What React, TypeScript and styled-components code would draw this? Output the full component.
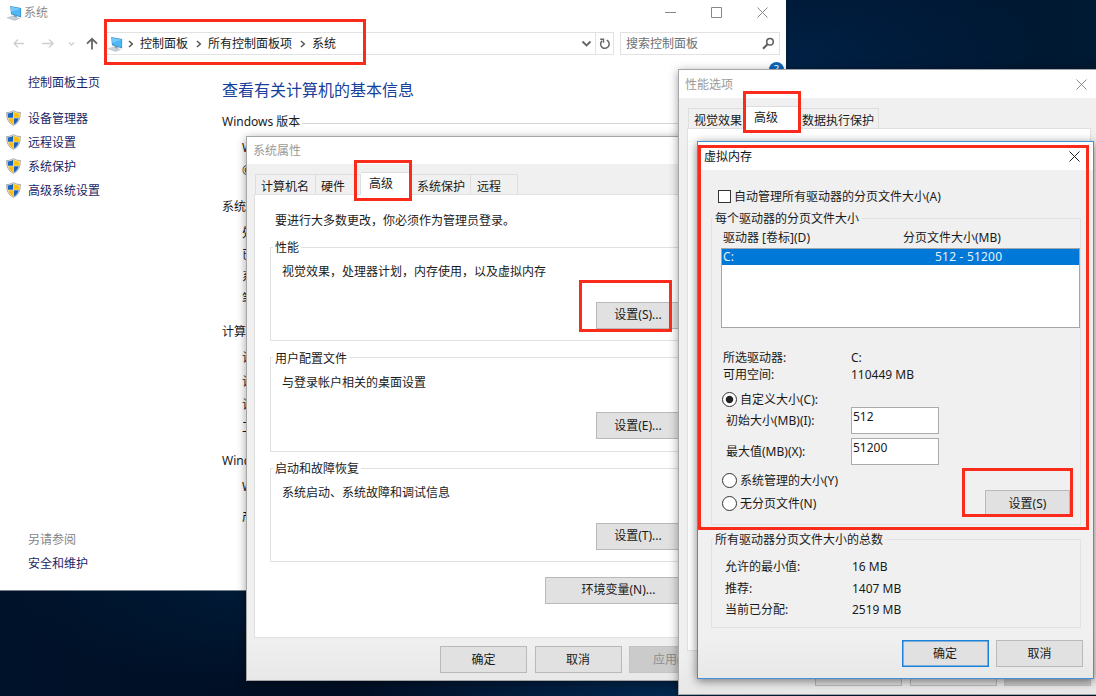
import type { ReactNode } from "react";
import styled, { createGlobalStyle, css } from "styled-components";

const RED = "#fb2b1b";
const FACE = "#f0f0f0";
const LINK = "#1c1f66";
const FONT = `"Noto Sans", "Noto Sans CJK SC", sans-serif`;

const GlobalStyle = createGlobalStyle`
  * {
    box-sizing: border-box;
  }
  body {
    margin: 0;
    overflow: hidden;
    font-family: ${FONT};
    font-size: 12px;
    line-height: 16px;
    color: #1a1a1a;
  }
`;

const Desktop = styled.div`
  position: relative;
  width: 1096px;
  height: 696px;
  overflow: hidden;
  background: radial-gradient(
      ellipse 260px 120px at 790px 60px,
      rgba(0, 36, 74, 0.8),
      transparent
    ),
    radial-gradient(
      ellipse 330px 110px at 680px 696px,
      rgba(0, 42, 84, 0.85),
      transparent
    ),
    radial-gradient(
      ellipse 260px 100px at 270px 590px,
      rgba(0, 30, 60, 0.8),
      transparent
    ),
    linear-gradient(90deg, #00122a 0%, #000e23 30%, #001530 80%, #001a33 100%);
`;

interface WindowProps {
  $x: number;
  $y: number;
  $w: number;
  $h: number;
}

const Window = styled.div<WindowProps>`
  position: absolute;
  isolation: isolate;
  left: ${(p) => p.$x}px;
  top: ${(p) => p.$y}px;
  width: ${(p) => p.$w}px;
  height: ${(p) => p.$h}px;
  display: flex;
  flex-direction: column;
  white-space: nowrap;
`;

const ExplorerWindow = styled(Window)`
  background: #fff;
  border-bottom: 1px solid #76808a;
`;

const Dialog = styled(Window)<{ $active?: boolean }>`
  border: 1px solid ${(p) => (p.$active ? "#3d93dc" : "#a6a6a6")};
  background: linear-gradient(${FACE} 92%, #e8e8e8);
  box-shadow: 0 2px 9px rgba(0, 0, 0, ${(p) => (p.$active ? 0.5 : 0.38)});
`;

const DialogTitle = styled.div<{ $h: number; $active?: boolean }>`
  display: flex;
  flex: none;
  align-items: center;
  justify-content: space-between;
  height: ${(p) => p.$h}px;
  padding: 1px 13px 0 6px;
  background: #fff;
  color: ${(p) => (p.$active ? "#111" : "#9a9a9a")};
`;

/* explorer window parts */

const Caption = styled.div`
  display: flex;
  align-items: center;
  height: 25px;
  padding: 0 18px 0 6px;
  gap: 2px;
  color: #8a8a8a;
`;

const CaptionButtons = styled.div`
  display: flex;
  gap: 35px;
  margin-left: auto;
  color: #888;
`;

const NavBar = styled.div`
  display: flex;
  align-items: center;
  height: 23px;
  margin-top: 7px;
  padding-right: 6px;
`;

const NavArrows = styled.div`
  display: flex;
  align-items: center;
  width: 104px;
  padding-left: 12px;
`;

const AddressBar = styled.div`
  display: flex;
  align-items: center;
  width: 510px;
  height: 23px;
  padding-left: 2px;
  border: 1px solid #e2e2e2;
`;

const Crumb = styled.span`
  margin: 0 8px 0 6px;
`;

const CrumbTrail = styled.div`
  margin-left: 5px;
`;

const DropDown = styled.svg`
  margin-left: auto;
`;

const Refresh = styled.div`
  display: flex;
  align-items: center;
  justify-content: center;
  width: 18px;
  height: 21px;
  margin-left: 3px;
  border-left: 1px solid #e2e2e2;
`;

const SearchBox = styled.div`
  display: flex;
  align-items: center;
  justify-content: space-between;
  width: 160px;
  height: 23px;
  margin-left: 6px;
  padding: 0 4px 0 5px;
  border: 1px solid #e2e2e2;
  color: #6f6f6f;
`;

const ExplorerBody = styled.div`
  display: flex;
  flex: 1;
`;

const Sidebar = styled.div`
  display: flex;
  flex-direction: column;
  width: 222px;
  padding: 20px 0 15px;
  color: ${LINK};
`;

const SideHome = styled.div`
  margin: 0 0 16px 28px;
`;

const SideLink = styled.div`
  display: flex;
  align-items: center;
  gap: 7px;
  height: 24px;
  padding-left: 6px;
  svg {
    margin-top: -2px;
  }
`;

const SeeAlso = styled.div`
  margin: auto 0 0 28px;
  line-height: 23.5px;
  span {
    display: block;
    color: #858585;
  }
`;

const Info = styled.div`
  position: relative;
  flex: 1;
`;

const Heading = styled.h1`
  margin: 23px 0 0;
  font-size: 16px;
  font-weight: 400;
  line-height: 24px;
  color: #17409c;
`;

const SectionHead = styled.div<{ $gap: number }>`
  display: flex;
  align-items: center;
  gap: 2px;
  margin-top: ${(p) => p.$gap}px;
  &::after {
    content: "";
    flex: 1;
    height: 1px;
    margin-top: 3px;
    background: #d6d6d6;
  }
`;

const InfoRow = styled.div<{ $gap: number }>`
  margin: ${(p) => p.$gap}px 0 0 20px;
`;

const HelpBadge = styled.div`
  position: absolute;
  right: 2px;
  top: 7px;
  width: 15px;
  height: 15px;
  border-radius: 50%;
  background: #0e66b8;
  color: #fff;
  font-size: 11px;
  line-height: 14px;
  text-align: center;
`;

/* dialog parts */

const Tabs = styled.div`
  display: flex;
  align-items: flex-end;
  height: 22px;
`;

const Tab = styled.div<{ $w: number; $inset?: number; $selected?: boolean }>`
  width: ${(p) => p.$w}px;
  height: 20px;
  padding: 3px 0 0 ${(p) => p.$inset ?? 5}px;
  border: 1px solid #dedede;
  border-bottom: 0;
  border-left-width: 0;
  line-height: 17px;
  &:first-child {
    border-left-width: 1px;
  }
  ${(p) =>
    p.$selected &&
    css`
      height: 23px;
      margin-bottom: -1px;
      padding: 3px 0 0 8px;
      background: #fff;
      line-height: 16px;
      z-index: 1;
    `}
`;

const Panel = styled.div<{ $h: number }>`
  height: ${(p) => p.$h}px;
  border: 1px solid #e0e0e0;
  background: #fff;
`;

const SystemBody = styled.div`
  padding: 8px 6px 0 7px;
`;

const SystemTabs = styled(Tabs)`
  padding-left: 1px;
`;

const SystemPanel = styled(Panel)`
  padding: 18px 14px 0 15px;
`;

const Intro = styled.div`
  margin: 0 0 9px 5px;
`;

const Group = styled.fieldset<{ $h: number; $gap?: number }>`
  min-width: 0;
  height: ${(p) => p.$h}px;
  margin: ${(p) => p.$gap ?? 0}px 0 0;
  padding: 0;
  border: 1px solid #e0e0e0;
  legend {
    margin-left: 2px;
    padding: 2px 2px 0;
  }
`;

const GroupText = styled.div`
  margin: 8px 0 21.5px 11px;
`;

const Button = styled.div<{
  $w?: number;
  $default?: boolean;
  $disabled?: boolean;
}>`
  display: flex;
  flex: none;
  align-items: center;
  justify-content: center;
  width: ${(p) => p.$w ?? 87}px;
  height: 27px;
  border: 1px solid #b9b9b9;
  background: #e1e1e1;
  ${(p) =>
    p.$default &&
    css`
      border-color: #1a80d8;
      box-shadow: inset 0 0 0 0.5px #1a80d8;
    `}
  ${(p) =>
    p.$disabled &&
    css`
      border-color: #c3c3c3;
      background: #cbcbcb;
      color: #8d8d8d;
    `}
`;

const GroupButton = styled(Button)`
  margin-left: 325px;
`;

const EnvButton = styled(Button)`
  margin: 14.5px 0 0 275px;
`;

const ButtonRow = styled.div<{ $gap: number }>`
  display: flex;
  justify-content: flex-end;
  gap: 7.5px;
  margin-top: ${(p) => p.$gap}px;
`;

const PerfBody = styled.div`
  padding: 8px 9px 0 8px;
`;

const PerfTabs = styled(Tabs)`
  padding-left: 1px;
`;

const MemoryBody = styled.div`
  padding: 19px 10px 0 13px;
`;

const Check = styled.div`
  display: flex;
  align-items: center;
  gap: 3px;
  height: 16px;
  margin: 0 0 4px 7px;
`;

const CheckMark = styled.span`
  width: 13px;
  height: 13px;
  margin-top: -2px;
  border: 1px solid #333;
  background: #fff;
`;

const MemoryGroup = styled(Group)`
  width: 370px;
  border-color: #e2e2e2;
  legend {
    margin-left: 1px;
  }
`;

const Columns = styled.div<{ $gap?: number; $left?: number; $first?: number }>`
  display: grid;
  grid-template-columns: ${(p) => p.$first ?? 128}px 1fr;
  margin: ${(p) => p.$gap ?? 0}px 0 0 ${(p) => p.$left ?? 11}px;
`;

const DriveList = styled.div`
  height: 80px;
  margin: 2px 0 0 9px;
  border: 1px solid #a5a5a5;
  background: #fff;
`;

const DriveRow = styled.div`
  display: grid;
  grid-template-columns: 212px 1fr;
  padding-left: 1px;
  background: #0078d7;
  color: #e6f2fc;
  letter-spacing: 0.2px;
`;

const SizeField = styled.div<{ $gap: number }>`
  display: grid;
  grid-template-columns: 125px 88px;
  align-items: center;
  margin: ${(p) => p.$gap}px 0 0 14px;
`;

const Input = styled.div`
  height: 27px;
  padding: 1px;
  border: 1px solid #ababab;
  background: #fff;
`;

const Radio = styled.div<{ $gap: number; $checked?: boolean }>`
  display: flex;
  align-items: center;
  gap: 3px;
  height: 16px;
  margin: ${(p) => p.$gap}px 0 0 10px;
  &::before {
    content: "";
    width: 13px;
    height: 13px;
    margin-top: -1px;
    border: 1px solid #333;
    border-radius: 50%;
    background: ${(p) =>
      p.$checked
        ? "radial-gradient(circle, #222 3.2px, #fff 4.2px)"
        : "#fff"};
  }
`;

const RadioArea = styled.div`
  display: flex;
  justify-content: space-between;
  padding-right: 10px;
`;

const SetButton = styled(Button)`
  margin-top: 25px;
`;

const Highlight = styled.div<WindowProps>`
  position: absolute;
  left: ${(p) => p.$x}px;
  top: ${(p) => p.$y}px;
  width: ${(p) => p.$w}px;
  height: ${(p) => p.$h}px;
  border: 3px solid ${RED};
`;

/* icons */

const Close = ({ color }: { color: string }) => (
  <svg width="11" height="11" viewBox="0 0 11 11">
    <path d="M.5 .5l10 10M10.5 .5l-10 10" stroke={color} fill="none" />
  </svg>
);

const Computer = () => (
  <svg width="16" height="16" viewBox="0 0 16 16">
    <path d="M.8 12.6l5.4-2.1 7.600 2.700-5.200 2.200z" fill="#c9d1d6" />
    <path d="M.8 12.6l7.800 2.800 5.200-2.200" fill="none" stroke="#aab5bc" strokeWidth=".6" />
    <path d="M8 9.700l3 1-.4 2-3.400-1.200z" fill="#93a3ad" />
    <path d="M4.200 1l10.900 2.100v9.300L5 9.200z" fill="#3b8fc4" />
    <path d="M4.900 1.800l9.500 1.900v7.900L5.600 8.600z" fill="#4db8f5" />
    <path d="M4.900 1.800l9.500 1.900-9.100 3.100z" fill="#74c9fa" />
  </svg>
);

const Shield = () => (
  <svg width="15" height="16" viewBox="0 0 15 16">
    <path
      d="M7.5 .6C5.5 2 3 2.6.7 2.5c-.2 6 1.600 10.500 6.800 12.900 5.200-2.400 7-6.900 6.800-12.900C12 2.600 9.500 2 7.500 .6z"
      fill="#f4f4ee"
      stroke="#8b8f92"
      strokeWidth=".8"
    />
    <path d="M7.200 1.800C5.600 2.800 3.600 3.400 1.700 3.400c0 1.600 0 2.900.3 4.300h5.200z" fill="#1763bd" />
    <path d="M7.800 1.800c1.600 1 3.600 1.600 5.500 1.600 0 1.600 0 2.900-.3 4.300H7.800z" fill="#fcc013" />
    <path d="M7.200 8.300H2.200c.8 2.900 2.400 5 5 6.200z" fill="#fcb813" />
    <path d="M7.800 8.300h5c-.8 2.900-2.400 5-5 6.200z" fill="#1763bd" />
  </svg>
);

const Chevron = () => (
  <svg width="6" height="8" viewBox="0 0 6 8">
    <path d="M1 1l3.300 3L1 7" stroke="#555" strokeWidth="1.500" fill="none" />
  </svg>
);

function Arrows() {
  return (
    <NavArrows>
      <svg width="88" height="14" viewBox="0 0 88 14" fill="none">
        <g stroke="#cfcfcf" strokeWidth="1.300">
          <path d="M12 6.500H2M6 2.500l-4 4 4 4" />
          <path d="M30 6.500h11M37 2.500l4 4-4 4" />
          <path d="M57 5.500l2.500 2.500L62 5.500" />
        </g>
        <path d="M80 12.500V2M75 6.700l5-4.900 5 4.900" stroke="#666" strokeWidth="1.800" />
      </svg>
    </NavArrows>
  );
}

function Crumbs({ items }: { items: string[] }) {
  return (
    <CrumbTrail>
      {items.map((item) => (
        <span key={item}>
          <Chevron />
          <Crumb>{item}</Crumb>
        </span>
      ))}
    </CrumbTrail>
  );
}

const SIDE_LINKS = ["设备管理器", "远程设置", "系统保护", "高级系统设置"];

function Explorer() {
  return (
    <ExplorerWindow $x={0} $y={0} $w={786} $h={591}>
      <Caption>
        <Computer />
        系统
        <CaptionButtons>
          <svg width="11" height="11" viewBox="0 0 11 11">
            <path d="M0 5.500h11" stroke="currentColor" />
          </svg>
          <svg width="11" height="11" viewBox="0 0 11 11">
            <path d="M.5 .5h10v10H.5z" stroke="currentColor" fill="none" />
          </svg>
          <Close color="#888" />
        </CaptionButtons>
      </Caption>
      <NavBar>
        <Arrows />
        <AddressBar>
          <Computer />
          <Crumbs items={["控制面板", "所有控制面板项", "系统"]} />
          <DropDown width="11" height="8" viewBox="0 0 11 8">
            <path d="M1.500 1.500l4 4 4-4" stroke="#666" strokeWidth="1.900" fill="none" />
          </DropDown>
          <Refresh>
            <svg width="12" height="12" viewBox="0 0 12 12" fill="none">
              <path d="M7.800 2.200A4.300 4.300 0 1 1 3 2.900" stroke="#666" strokeWidth="1.500" />
              <path d="M1.200 1.300h3.300v3.400" stroke="#666" strokeWidth="1.400" />
            </svg>
          </Refresh>
        </AddressBar>
        <SearchBox>
          搜索控制面板
          <svg width="13" height="13" viewBox="0 0 13 13" fill="none" stroke="#5c5c5c">
            <circle cx="8" cy="4.700" r="3.300" strokeWidth="1.500" />
            <path d="M5.500 7.200L1 11.700" strokeWidth="2" />
          </svg>
        </SearchBox>
      </NavBar>
      <ExplorerBody>
        <Sidebar>
          <SideHome>控制面板主页</SideHome>
          {SIDE_LINKS.map((text) => (
            <SideLink key={text}>
              <Shield />
              {text}
            </SideLink>
          ))}
          <SeeAlso>
            <span>另请参阅</span>
            安全和维护
          </SeeAlso>
        </Sidebar>
        <Info>
          <HelpBadge>?</HelpBadge>
          <Heading>查看有关计算机的基本信息</Heading>
          <SectionHead $gap={12}>Windows 版本</SectionHead>
          <InfoRow $gap={10}>W</InfoRow>
          <InfoRow $gap={7}>©</InfoRow>
          <SectionHead $gap={20}>系统</SectionHead>
          <InfoRow $gap={10}>处</InfoRow>
          <InfoRow $gap={6}>已</InfoRow>
          <InfoRow $gap={6}>系</InfoRow>
          <InfoRow $gap={6}>笔</InfoRow>
          <SectionHead $gap={17}>计算</SectionHead>
          <InfoRow $gap={10}>计</InfoRow>
          <InfoRow $gap={8}>计</InfoRow>
          <InfoRow $gap={7}>计</InfoRow>
          <InfoRow $gap={7}>工</InfoRow>
          <SectionHead $gap={17}>Windo</SectionHead>
          <InfoRow $gap={10}>W</InfoRow>
          <InfoRow $gap={14}>产</InfoRow>
        </Info>
      </ExplorerBody>
    </ExplorerWindow>
  );
}

interface SettingsGroupProps {
  title: string;
  gap?: number;
  button: string;
  children: ReactNode;
}

function SettingsGroup({ title, gap, button, children }: SettingsGroupProps) {
  return (
    <Group $h={103} $gap={gap}>
      <legend>{title}</legend>
      <GroupText>{children}</GroupText>
      <GroupButton $w={84}>{button}</GroupButton>
    </Group>
  );
}

function SystemProperties() {
  return (
    <Dialog $x={246} $y={136} $w={477} $h={545}>
      <DialogTitle $h={27}>系统属性</DialogTitle>
      <SystemBody>
        <SystemTabs>
          <Tab $w={61}>计算机名</Tab>
          <Tab $w={45}>硬件</Tab>
          <Tab $w={51} $selected>
            高级
          </Tab>
          <Tab $w={59}>系统保护</Tab>
          <Tab $w={47} $inset={6}>
            远程
          </Tab>
        </SystemTabs>
        <SystemPanel $h={444}>
          <Intro>要进行大多数更改，你必须作为管理员登录。</Intro>
          <SettingsGroup title="性能" button="设置(S)...">
            视觉效果，处理器计划，内存使用，以及虚拟内存
          </SettingsGroup>
          <SettingsGroup title="用户配置文件" gap={7.5} button="设置(E)...">
            与登录帐户相关的桌面设置
          </SettingsGroup>
          <SettingsGroup title="启动和故障恢复" gap={7.5} button="设置(T)...">
            系统启动、系统故障和调试信息
          </SettingsGroup>
          <EnvButton $w={147}>环境变量(N)...</EnvButton>
        </SystemPanel>
        <ButtonRow $gap={8}>
          <Button>确定</Button>
          <Button>取消</Button>
          <Button $disabled>应用(A)</Button>
        </ButtonRow>
      </SystemBody>
    </Dialog>
  );
}

function PerformanceOptions() {
  return (
    <Dialog $x={678} $y={69} $w={423} $h={626}>
      <DialogTitle $h={28}>
        性能选项
        <Close color="#8d8d8d" />
      </DialogTitle>
      <PerfBody>
        <PerfTabs>
          <Tab $w={58}>视觉效果</Tab>
          <Tab $w={55} $selected>
            高级
          </Tab>
          <Tab $w={78} $inset={1}>
            数据执行保护
          </Tab>
        </PerfTabs>
        <Panel $h={523} />
        <ButtonRow $gap={8}>
          <Button />
          <Button />
          <Button $disabled />
        </ButtonRow>
      </PerfBody>
    </Dialog>
  );
}

function VirtualMemory() {
  return (
    <Dialog $x={697} $y={141} $w={397} $h={538} $active>
      <DialogTitle $h={28} $active>
        虚拟内存
        <Close color="#222" />
      </DialogTitle>
      <MemoryBody>
        <Check>
          <CheckMark />
          自动管理所有驱动器的分页文件大小(A)
        </Check>
        <MemoryGroup $h={316}>
          <legend>每个驱动器的分页文件大小</legend>
          <Columns $gap={3} $first={180}>
            <span>驱动器 [卷标](D)</span>
            <span>分页文件大小(MB)</span>
          </Columns>
          <DriveList>
            <DriveRow>
              <span>C:</span>
              <span>512 - 51200</span>
            </DriveRow>
          </DriveList>
          <Columns $gap={22}>
            <span>所选驱动器:</span>
            <span>C:</span>
          </Columns>
          <Columns $gap={1}>
            <span>可用空间:</span>
            <span>110449 MB</span>
          </Columns>
          <Radio $gap={9} $checked>
            自定义大小(C):
          </Radio>
          <SizeField $gap={-1}>
            初始大小(MB)(I):
            <Input>512</Input>
          </SizeField>
          <SizeField $gap={4}>
            最大值(MB)(X):
            <Input>51200</Input>
          </SizeField>
          <RadioArea>
            <div>
              <Radio $gap={8}>系统管理的大小(Y)</Radio>
              <Radio $gap={7}>无分页文件(N)</Radio>
            </div>
            <SetButton $w={85}>设置(S)</SetButton>
          </RadioArea>
        </MemoryGroup>
        <MemoryGroup $h={98} $gap={5}>
          <legend>所有驱动器分页文件大小的总数</legend>
          <Columns $gap={11} $left={13} $first={127}>
            <span>允许的最小值:</span>
            <span>16 MB</span>
          </Columns>
          <Columns $gap={6} $left={13} $first={127}>
            <span>推荐:</span>
            <span>1407 MB</span>
          </Columns>
          <Columns $gap={5} $left={13} $first={127}>
            <span>当前已分配:</span>
            <span>2519 MB</span>
          </Columns>
        </MemoryGroup>
        <ButtonRow $gap={12}>
          <Button $default>确定</Button>
          <Button>取消</Button>
        </ButtonRow>
      </MemoryBody>
    </Dialog>
  );
}

export default function App() {
  return (
    <>
      <GlobalStyle />
      <Desktop>
        <Explorer />
        <SystemProperties />
        <PerformanceOptions />
        <VirtualMemory />
        <Highlight $x={104} $y={19} $w={262} $h={46} />
        <Highlight $x={354} $y={160} $w={58} $h={41} />
        <Highlight $x={579} $y={280} $w={93} $h={52} />
        <Highlight $x={743} $y={91} $w={58} $h={42} />
        <Highlight $x={698} $y={145} $w={391} $h={385} />
        <Highlight $x={962} $y={468} $w={111} $h={49} />
      </Desktop>
    </>
  );
}
